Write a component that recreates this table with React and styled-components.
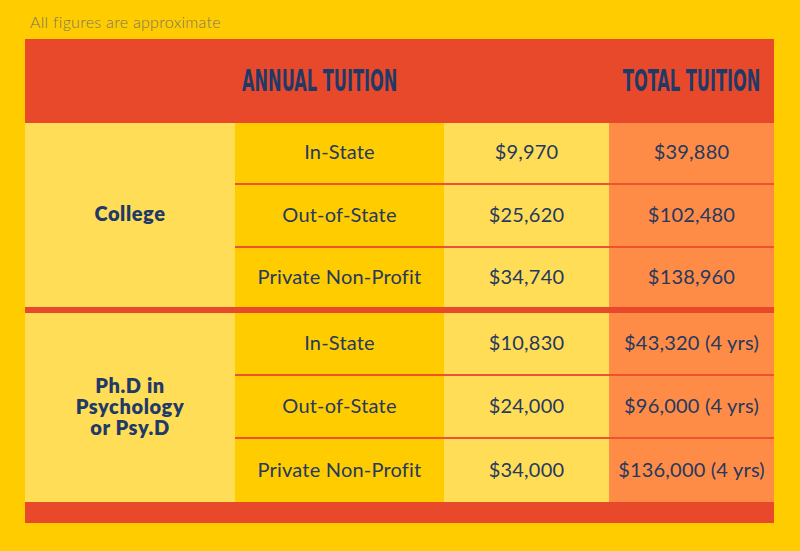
import React from "react";
import styled, { createGlobalStyle } from "styled-components";

const GlobalStyle = createGlobalStyle`
  html, body { margin: 0; padding: 0; background: #FFCC00; }
  body { font-family: "Lato", "Liberation Sans", sans-serif; }
`;

const Page = styled.div`
  width: 800px;
  height: 551px;
  box-sizing: border-box;
  padding: 0 26px 0 25px;
  background: #FFCC00;
  overflow: hidden;
`;

const Note = styled.div`
  height: 39px;
  box-sizing: border-box;
  padding: 12px 0 0 5px;
  font-family: "Lato", sans-serif;
  font-weight: 300;
  font-size: 16px;
  line-height: 19px;
  letter-spacing: 0.3px;
  color: #7a7564;
`;

const Table = styled.div`
  width: 749px;
  display: flex;
  flex-direction: column;
`;

const cols = "210px 209px 165px 165px";

const Header = styled.div`
  display: grid;
  grid-template-columns: ${cols};
  height: 84px;
  background: #E8492B;
  align-items: center;
`;

const HeadText = styled.div`
  grid-column: ${(p) => p.$col};
  display: flex;
  justify-content: ${(p) => (p.$center ? "center" : "flex-start")};
  padding-left: ${(p) => (p.$center ? "0" : "7px")};
  white-space: nowrap;
`;

const HeadLabel = styled.span`
  display: inline-block;
  font-family: "Liberation Sans Narrow", "DejaVu Sans Condensed", "Roboto", sans-serif;
  font-weight: 700;
  font-size: 30px;
  line-height: 30px;
  color: #1F3A68;
  transform: scaleX(${(p) => p.$sx});
  transform-origin: ${(p) => (p.$center ? "center" : "left")} center;
`;

const Group = styled.div`
  display: grid;
  grid-template-columns: ${cols};
  grid-template-rows: ${(p) => p.$rows};
`;

const GroupLabel = styled.div`
  grid-column: 1;
  grid-row: 1 / span 3;
  background: #FFDD57;
  display: flex;
  align-items: center;
  justify-content: center;
  padding-bottom: 3px;
  text-align: center;
  font-family: "Lato", sans-serif;
  font-weight: 800;
  font-size: 20px;
  line-height: 21px;
  letter-spacing: 0.6px;
  color: #1F3A68;
`;

const Cell = styled.div`
  background: ${(p) => p.$bg};
  border-top: ${(p) => (p.$first ? "none" : "2px solid #EE5231")};
  display: flex;
  align-items: center;
  justify-content: center;
  padding-bottom: 4px;
  font-family: "Lato", sans-serif;
  font-weight: 400;
  font-size: 20px;
  letter-spacing: 0.2px;
  color: #26395F;
  white-space: nowrap;
`;

const Divider = styled.div`
  height: 6px;
  background: #E8492B;
`;

const Footer = styled.div`
  height: 21px;
  background: #E8492B;
`;

const groups = [
  {
    label: ["College"],
    rows: "60px 63px 61px",
    data: [
      ["In-State", "$9,970", "$39,880"],
      ["Out-of-State", "$25,620", "$102,480"],
      ["Private Non-Profit", "$34,740", "$138,960"],
    ],
  },
  {
    label: ["Ph.D in", "Psychology", "or Psy.D"],
    rows: "61px 63px 65px",
    data: [
      ["In-State", "$10,830", "$43,320 (4 yrs)"],
      ["Out-of-State", "$24,000", "$96,000 (4 yrs)"],
      ["Private Non-Profit", "$34,000", "$136,000 (4 yrs)"],
    ],
  },
];

export default function App() {
  return (
    <>
      <GlobalStyle />
      <Page>
        <Note>All figures are approximate</Note>
        <Table>
          <Header>
            <HeadText $col={2}>
              <HeadLabel $sx={0.6}>ANNUAL TUITION</HeadLabel>
            </HeadText>
            <HeadText $col={4} $center>
              <HeadLabel $sx={0.6} $center>TOTAL TUITION</HeadLabel>
            </HeadText>
          </Header>
          {groups.map((g, gi) => (
            <React.Fragment key={gi}>
              {gi > 0 && <Divider />}
              <Group $rows={g.rows}>
                <GroupLabel>
                  <span>
                    {g.label.map((l, i) => (
                      <React.Fragment key={i}>
                        {i > 0 && <br />}
                        {l}
                      </React.Fragment>
                    ))}
                  </span>
                </GroupLabel>
                {g.data.map((r, ri) => (
                  <React.Fragment key={ri}>
                    <Cell $bg="#FFCC00" $first={ri === 0}>{r[0]}</Cell>
                    <Cell $bg="#FFDD57" $first={ri === 0}>{r[1]}</Cell>
                    <Cell $bg="#FF8C46" $first={ri === 0}>{r[2]}</Cell>
                  </React.Fragment>
                ))}
              </Group>
            </React.Fragment>
          ))}
          <Footer />
        </Table>
      </Page>
    </>
  );
}
